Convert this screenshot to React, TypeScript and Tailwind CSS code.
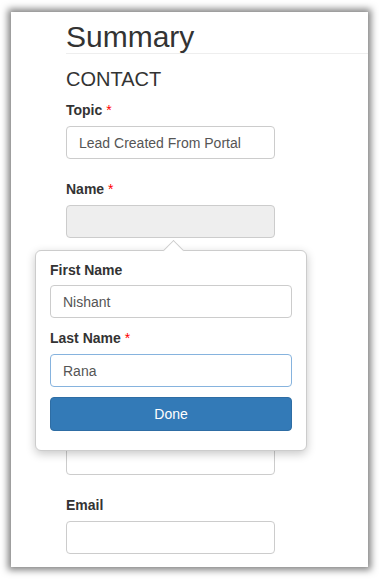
import React from 'react'

type FieldProps = {
  label?: string
  required?: boolean
  value?: string
  disabled?: boolean
  className?: string
}

function Field({ label, required, value, disabled, className = '' }: FieldProps) {
  return (
    <div className={className}>
      <label className="block h-[20px] text-[14px] leading-[20px] font-bold text-[#333] mb-[6px]">
        {label}
        {required && <span className="text-[#ff0000] font-normal"> *</span>}
      </label>
      <input
        type="text"
        readOnly
        value={value ?? ''}
        className={`block w-[209px] h-[33px] rounded-[4px] border border-[#ccc] px-[12px] text-[14px] text-[#555] outline-none ${
          disabled ? 'bg-[#eee]' : 'bg-white'
        }`}
      />
    </div>
  )
}

function NamePopover() {
  return (
    <div className="absolute left-[-31px] top-[71px] z-10 w-[272px] rounded-[6px] border border-[#ccc] bg-white px-[14px] pt-[9px] pb-[19px] shadow-[0_3px_10px_rgba(0,0,0,0.22)]">
      {/* arrow */}
      <div className="absolute left-[130px] top-[-8px] h-[15px] w-[15px] rotate-45 border-l border-t border-[#ccc] bg-white" />
      <label className="relative block text-[14px] leading-[20px] font-bold text-[#333] mb-[5px]">First Name</label>
      <input
        type="text"
        readOnly
        value="Nishant"
        className="block w-full h-[33px] rounded-[4px] border border-[#ccc] bg-white px-[12px] text-[14px] text-[#555] outline-none"
      />
      <label className="block mt-[10px] text-[14px] leading-[20px] font-bold text-[#333] mb-[6px]">
        Last Name<span className="text-[#ff0000] font-normal"> *</span>
      </label>
      <input
        type="text"
        readOnly
        value="Rana"
        className="block w-full h-[33px] rounded-[4px] border border-[#86b3de] bg-white px-[12px] text-[14px] text-[#555] outline-none"
      />
      <button className="mt-[10px] block w-full h-[34px] rounded-[4px] border border-[#2e6da4] bg-[#337ab7] text-[14px] text-white">
        Done
      </button>
    </div>
  )
}

export default function App() {
  return (
    <div className="min-h-screen bg-white pt-[12px] pl-[11px] font-['Liberation_Sans',Arial,sans-serif]">
      <div className="w-[357px] bg-white pl-[55px] pt-[8px] pb-[13px] shadow-[0_0_7px_3px_rgba(0,0,0,0.5)]">
        <h1 className="border-b border-[#eee] text-[30px] leading-[33px] text-[#333]">Summary</h1>
        <h2 className="mt-[14px] text-[20px] leading-[22px] text-[#333]">CONTACT</h2>

        <Field className="mt-[10px]" label="Topic" required value="Lead Created From Portal" />

        <div className="relative mt-[20px]">
          <Field label="Name" required disabled />
          <NamePopover />
        </div>

        {/* fields hidden under the popover */}
        <Field className="mt-[20px]" />
        <Field className="mt-[20px]" />
        <Field className="mt-[20px]" />
        <Field className="mt-[20px]" label="Email" />
      </div>
    </div>
  )
}
